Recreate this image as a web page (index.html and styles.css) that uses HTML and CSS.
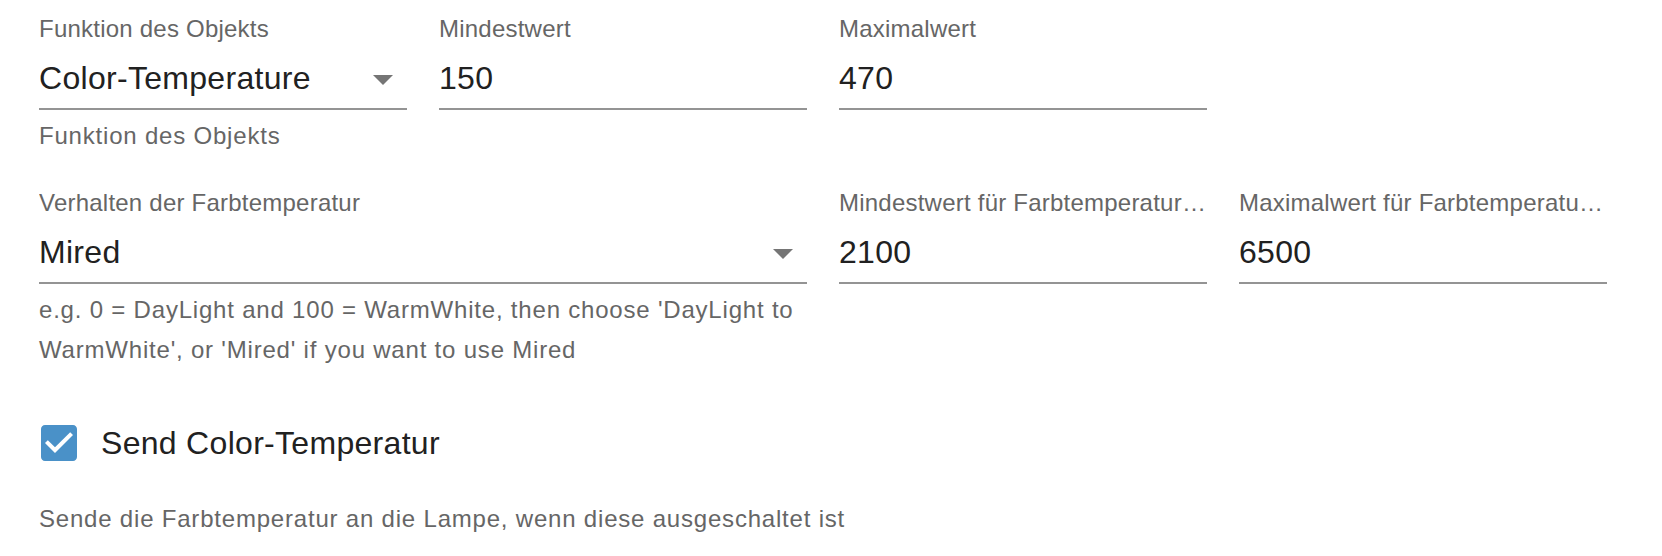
FILE: index.html
```html
<!DOCTYPE html>
<html lang="de">
<head>
<meta charset="utf-8">
<title>Color-Temperature</title>
<link rel="stylesheet" href="styles.css">
</head>
<body>
<form class="form">
  <div class="field">
    <label class="field-label">Funktion des Objekts</label>
    <div class="field-input select">
      <span class="field-value">Color-Temperature</span>
      <svg class="arrow" width="20" height="10" viewBox="7 10 10 5"><path d="M7 10l5 5 5-5z"/></svg>
    </div>
    <p class="helper">Funktion des Objekts</p>
  </div>
  <div class="field">
    <label class="field-label">Mindestwert</label>
    <div class="field-input"><span class="field-value">150</span></div>
  </div>
  <div class="field">
    <label class="field-label">Maximalwert</label>
    <div class="field-input"><span class="field-value">470</span></div>
  </div>
  <div class="spacer"></div>

  <div class="field span-2">
    <label class="field-label">Verhalten der Farbtemperatur</label>
    <div class="field-input select">
      <span class="field-value">Mired</span>
      <svg class="arrow" width="20" height="10" viewBox="7 10 10 5"><path d="M7 10l5 5 5-5z"/></svg>
    </div>
    <p class="helper">e.g. 0 = DayLight and 100 = WarmWhite, then choose 'DayLight to WarmWhite', or 'Mired' if you want to use Mired</p>
  </div>
  <div class="field">
    <label class="field-label">Mindestwert für Farbtemperatur (Kelvin)</label>
    <div class="field-input"><span class="field-value">2100</span></div>
  </div>
  <div class="field">
    <label class="field-label">Maximalwert für Farbtemperatur (Kelvin)</label>
    <div class="field-input"><span class="field-value">6500</span></div>
  </div>

  <div class="check-block span-4">
    <label class="check-row">
      <span class="check-box">
        <svg width="48" height="48" viewBox="0 0 24 24"><path d="M19 3H5c-1.11 0-2 .9-2 2v14c0 1.1.89 2 2 2h14c1.11 0 2-.9 2-2V5c0-1.1-.89-2-2-2zm-9 14l-5-5 1.41-1.41L10 14.17l7.59-7.59L19 8l-9 9z"/></svg>
      </span>
      <span class="check-text">Send Color-Temperatur</span>
    </label>
    <p class="helper check-helper">Sende die Farbtemperatur an die Lampe, wenn diese ausgeschaltet ist</p>
  </div>
</form>
</body>
</html>
```

FILE: styles.css
```css
html, body {
  margin: 0;
  padding: 0;
  background: #ffffff;
}

body {
  font-family: "Liberation Sans", Arial, Helvetica, sans-serif;
  color: #212121;
}

.form {
  display: grid;
  grid-template-columns: repeat(4, 368px);
  column-gap: 32px;
  row-gap: 32px;
  align-items: start;
  padding: 14px 0 0 39px;
  margin: 0;
}

.span-2 { grid-column: span 2; }
.span-4 { grid-column: span 4; }

.field {
  display: flex;
  flex-direction: column;
  min-width: 0;
}

.field-label {
  display: block;
  height: 32px;
  box-sizing: border-box;
  padding-top: 3px;
  font-size: 24px;
  line-height: 24px;
  letter-spacing: 0.225px;
  color: #666666;
  white-space: nowrap;
  overflow: hidden;
  text-overflow: ellipsis;
}

.field-input {
  display: flex;
  align-items: center;
  padding: 9px 0 7px;
  border-bottom: 2px solid #949494;
}

.field-value {
  flex: 1;
  min-width: 0;
  font-size: 32px;
  line-height: 46px;
  letter-spacing: 0.3px;
  color: #212121;
  white-space: nowrap;
  overflow: hidden;
}

.arrow {
  flex: none;
  fill: #757575;
  margin: 4px 14px 0 0;
}

.helper {
  margin: 6px 0 0;
  font-size: 24px;
  line-height: 1.66;
  letter-spacing: 0.8px;
  color: #666666;
}

.check-block {
  display: flex;
  flex-direction: column;
}

.check-row {
  display: flex;
  align-items: center;
  margin-left: -22px;
  cursor: pointer;
}

.check-box {
  display: flex;
  padding: 18px;
}

.check-box svg {
  fill: #4a91c8;
}

.check-text {
  font-size: 32px;
  line-height: 48px;
  letter-spacing: 0.3px;
  color: #212121;
}

.check-helper {
  margin-top: 14px;
}
```
